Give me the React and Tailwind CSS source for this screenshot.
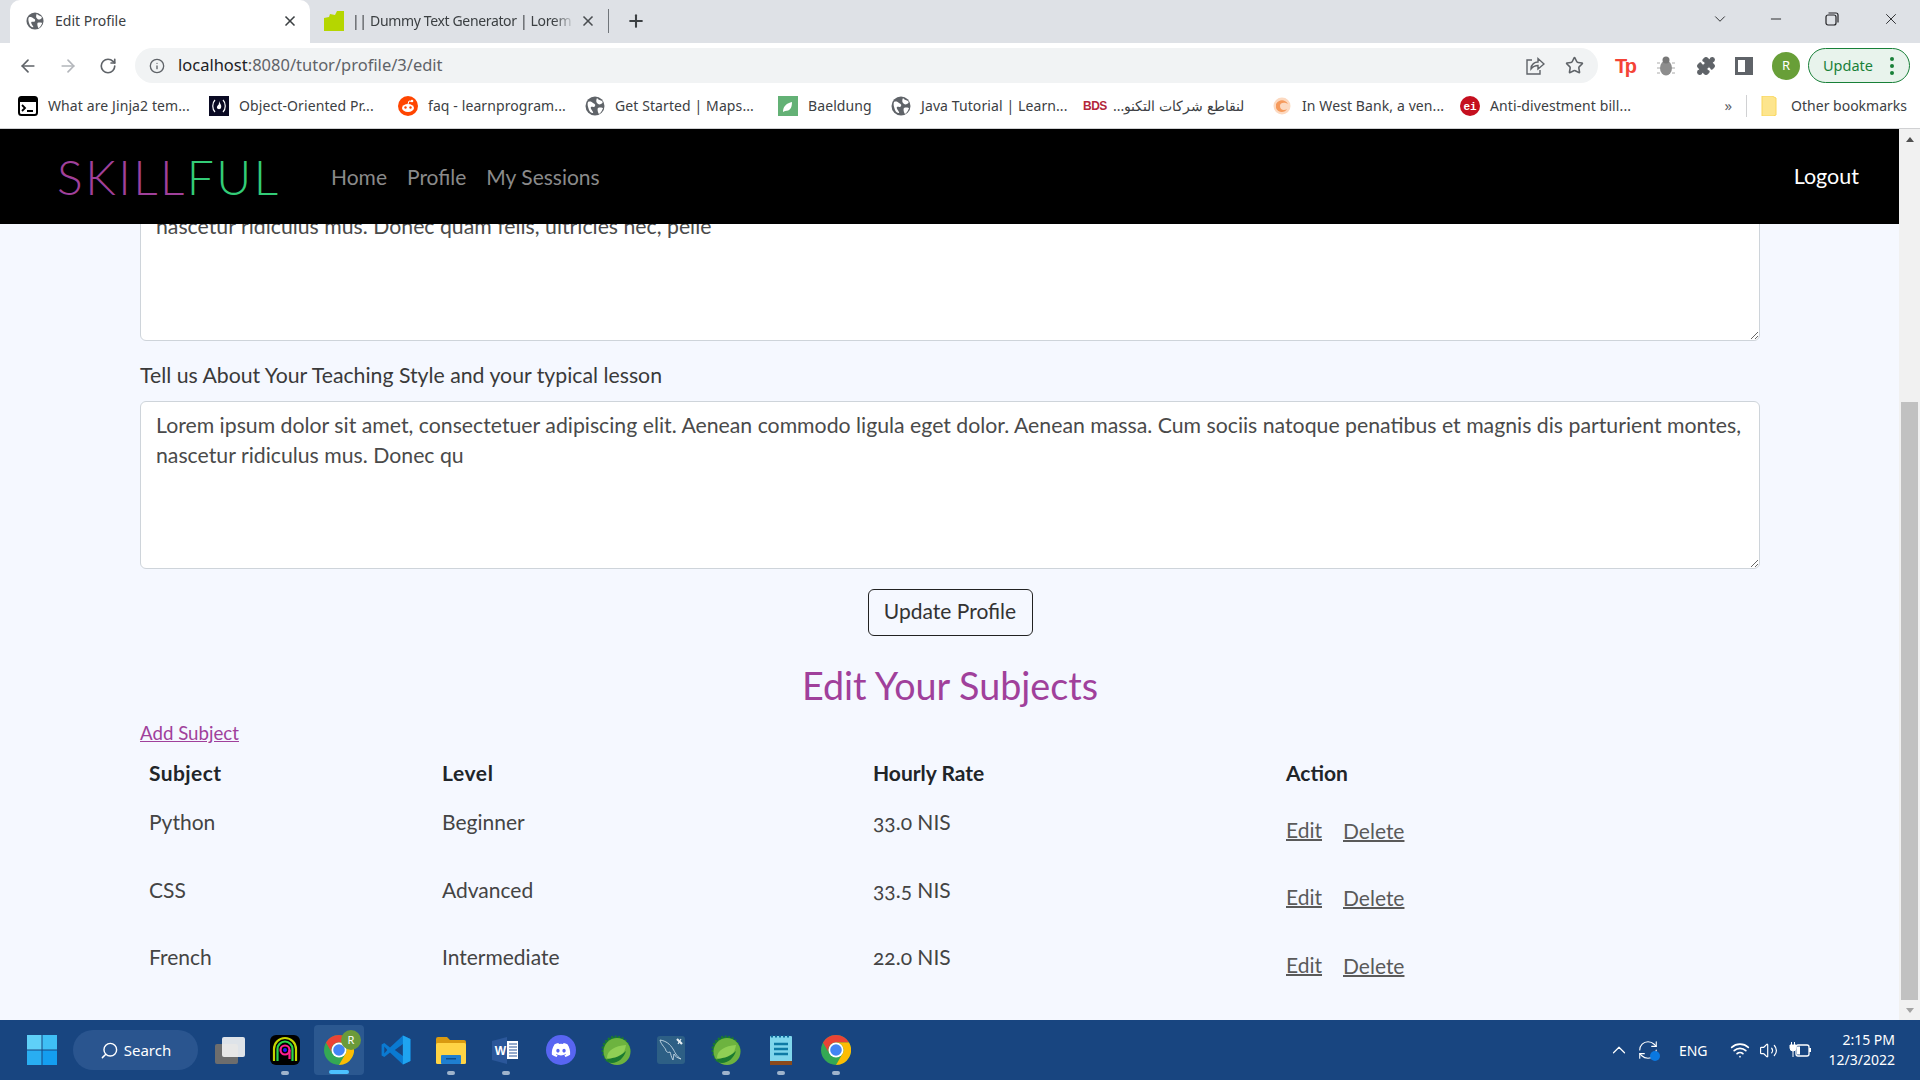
import React from "react";
import { ArrowLeft, ArrowRight, RotateCw, RefreshCw, Info, Star, Puzzle, ChevronDown, Minus, X, Plus, Search, ChevronUp, Wifi, Volume2 } from "lucide-react";
import { FaDiscord } from "react-icons/fa";

const RW = "font-['Lato','Open_Sans',sans-serif]";
const UI = "font-['Noto_Sans','Open_Sans',sans-serif]";

function GlobeIcon({ size = 18 }) {
  return (
    <svg width={size} height={size} viewBox="0 0 20 20" className="shrink-0">
      <circle cx="10" cy="10" r="9.5" fill="#5f6368" />
      <path d="M3 6c2-1 4 0 5 1s3 1 2 3-3 0-4 1 1 3 2 5 -3 1-4-2-2-6-1-8zM12 2c1 2 4 2 5 3s1 2-1 3-3 0-4-1-1-3 0-5zM13 12c2-1 5 0 5 0s-1 4-4 6c-1-1-2-5-1-6z" fill="#fff" />
    </svg>
  );
}
function Bookmark({ icon, label, className = "", rtl }) {
  return (
    <div className={`flex items-center gap-[10px] shrink-0 ${className}`}>
      {icon}
      <span dir={rtl ? "rtl" : undefined} className="text-[14px] tracking-[0.1px] text-[#3c4043] whitespace-nowrap leading-none">{label}</span>
    </div>
  );
}
function TabBar() {
  return (
    <div className="h-[43px] bg-[#dee1e6] flex items-end shrink-0 relative">
      <div className="w-[300px] ml-[10px] h-[43px] bg-white rounded-t-[10px] flex items-center pl-[16px] pr-[12px] pb-[2px] shrink-0">
        <GlobeIcon />
        <span className="ml-[11px] text-[14px] text-[#3c4043] flex-1">Edit Profile</span>
        <X size={16} strokeWidth={2.5} className="text-[#3c4043]" />
      </div>
      <div className="h-[43px] flex items-center pl-[14px] pb-[2px] shrink-0">
        <svg width="20" height="20" viewBox="0 0 20 20" className="shrink-0"><path d="M0 20V7l5-1 1-3 5 1 2-4h7v20z" fill="#b5d600" /></svg>
        <span className="ml-[8px] text-[14px] tracking-[-0.35px] text-[#3c4043] w-[219px] overflow-hidden whitespace-nowrap [mask-image:linear-gradient(to_right,#000_92%,#0003)]">|| Dummy Text Generator | Lorem</span>
        <X size={16} strokeWidth={2.5} className="text-[#4a4d51] ml-[9px]" />
        <div className="w-px h-[24px] bg-[#70757a] ml-[12px]" />
      </div>
      <Plus size={20} strokeWidth={2.5} className="text-[#3c4043] mb-[12px] ml-[17px]" />
      <div className="ml-auto flex items-center h-[38px] self-start text-[#202124]">
        <ChevronDown size={18} strokeWidth={1.2} className="mr-[39px]" />
        <Minus size={16} strokeWidth={1.4} className="mr-[41px]" />
        <svg width="14" height="14" viewBox="0 0 14 14" fill="none" stroke="#202124" strokeWidth="1.2" className="mr-[43px]"><rect x="1" y="3" width="10" height="10" rx="2" /><path d="M3.5 1H11a2 2 0 0 1 2 2v7.5" /></svg>
        <X size={18} strokeWidth={1.2} className="mr-[20px]" />
      </div>
    </div>
  );
}
function Toolbar() {
  return (
    <div className="h-[40px] pt-[5px] bg-white flex items-center shrink-0">
      <ArrowLeft size={20} strokeWidth={2} className="text-[#5f6368] ml-[18px]" />
      <ArrowRight size={20} strokeWidth={2} className="text-[#b3b6bb] ml-[20px]" />
      <RotateCw size={18} strokeWidth={2.2} className="text-[#5f6368] ml-[21px]" />
      <div className="ml-[18px] h-[35px] w-[1463px] rounded-full bg-[#f1f3f4] flex items-center pl-[14px] pr-[14px] shrink-0">
        <Info size={16} strokeWidth={2} className="text-[#5f6368]" />
        <span className="ml-[13px] text-[16.5px] leading-none text-[#5f6368]"><span className="text-[#202124]">localhost</span>:8080/tutor/profile/3/edit</span>
        <svg width="20" height="20" viewBox="0 0 20 20" fill="none" stroke="#5f6368" strokeWidth="1.4" className="ml-auto"><path d="M7 4H2v14h13v-4" /><path d="M6 13c0-5 4-7 7-7V2.500l6 5.500-6 5V9.500c-3 0-5 1-7 3.500z" /></svg>
        <Star size={19} strokeWidth={2} className="text-[#5f6368] ml-[20px]" />
      </div>
      <span className="ml-[17px] w-[20px] text-[#f44336] font-bold text-[20px] leading-none font-['Liberation_Sans',sans-serif] tracking-[-2.5px]">Tp</span>
      <svg width="20" height="22" viewBox="0 0 20 22" className="ml-[21px]"><ellipse cx="10" cy="13" rx="6" ry="7.500" fill="#8d8d8d" /><circle cx="10" cy="5" r="3.500" fill="#777" /><path d="M1 8h3M1 13h3M1 18h3M16 8h3M16 13h3M16 18h3" stroke="#aaa" strokeWidth="1" /></svg>
      <Puzzle size={20} fill="#5f6368" strokeWidth={1.500} className="text-[#5f6368] ml-[20px]" />
      <div className="ml-[19px] w-[18px] h-[18px] border-[3px] border-[#5f6368] bg-[linear-gradient(to_right,#fff_55%,#5f6368_55%)]" />
      <div className="ml-[19px] w-[28px] h-[28px] rounded-full bg-[#689f38] text-white text-[13px] flex items-center justify-center">R</div>
      <div className="ml-[8px] w-[102px] h-[35px] rounded-full border border-[#188038] bg-[#e8f3ec] flex items-center pl-[14px] text-[#188038] text-[14.500px] shrink-0">
        Update
        <div className="ml-auto mr-[15px] flex flex-col gap-[3px]">
          <span className="w-[4px] h-[4px] rounded-full bg-[#188038]" />
          <span className="w-[4px] h-[4px] rounded-full bg-[#188038]" />
          <span className="w-[4px] h-[4px] rounded-full bg-[#188038]" />
        </div>
      </div>
    </div>
  );
}
function BookmarksBar() {
  return (
    <div className="h-[46px] bg-white border-b border-[#d0d1d3] flex items-center pl-[18px] shrink-0">
      <Bookmark className="w-[191px]" label="What are Jinja2 tem..." icon={
        <svg width="20" height="20" viewBox="0 0 20 20"><rect x="1" y="1" width="18" height="18" rx="2.500" fill="#fff" stroke="#000" strokeWidth="2" /><rect x="1" y="1" width="18" height="5" fill="#000" /><path d="M4 9l3 3-3 3M9 15h6" stroke="#000" strokeWidth="1.800" fill="none" /></svg>} />
      <Bookmark className="w-[189px]" label="Object-Oriented Pr..." icon={
        <svg width="20" height="20" viewBox="0 0 20 20"><rect width="20" height="20" fill="#0a0a23" /><path d="M6 4c-3 3-3 9 0 12M14 4c3 3 3 9 0 12" stroke="#fff" fill="none" strokeWidth="1.200" /><path d="M10 5c1 3 3 4 2 7-.5 1.500-3.500 1.500-4 0-.5-2 1-2 1-3 1 0 1-2 1-4z" fill="#fff" /></svg>} />
      <Bookmark className="w-[187px]" label="faq - learnprogram..." icon={
        <svg width="20" height="20" viewBox="0 0 20 20"><circle cx="10" cy="10" r="10" fill="#ff4500" /><ellipse cx="10" cy="12" rx="6" ry="4" fill="#fff" /><circle cx="7.500" cy="11.500" r="1.200" fill="#ff4500" /><circle cx="12.500" cy="11.500" r="1.200" fill="#ff4500" /><circle cx="14" cy="5" r="1.300" fill="#fff" /><path d="M10 8l1-3 3 .5" stroke="#fff" fill="none" /></svg>} />
      <Bookmark className="w-[193px]" label="Get Started  |  Maps..." icon={<GlobeIcon size={20} />} />
      <Bookmark className="w-[113px]" label="Baeldung" icon={
        <svg width="20" height="20" viewBox="0 0 20 20"><rect width="20" height="20" fill="#63b175" /><path d="M5 16c0-6 4-9 9-10 0 6-2 9-7 9z" fill="#fff" /></svg>} />
      <Bookmark className="w-[192px]" label="Java Tutorial | Learn..." icon={<GlobeIcon size={20} />} />
      <Bookmark className="w-[189px]" rtl label="لنقاطع شركات التكنو..." icon={
        <span className="font-['Liberation_Sans',sans-serif] font-bold text-[#b3263a] text-[12px] w-[20px] tracking-[-.5px]">BDS</span>} />
      <Bookmark className="w-[188px]" label="In West Bank, a ven..." icon={
        <svg width="20" height="20" viewBox="0 0 20 20"><circle cx="10" cy="10" r="8.500" fill="#fcd9c0" /><path d="M4 8c3-5 9-5 12 0-3-2-8-2-8 2s4 5 7 3c-2 4-9 4-11-1" fill="#f59a5c" /></svg>} />
      <Bookmark label="Anti-divestment bill..." icon={
        <svg width="20" height="20" viewBox="0 0 20 20"><circle cx="10" cy="10" r="10" fill="#c50f1f" /><text x="10" y="14" textAnchor="middle" fontSize="11" fontWeight="700" fill="#fff" fontFamily="Liberation Mono">ei</text></svg>} />
      <span className="ml-auto text-[#5f6368] text-[15px] leading-none">»</span>
      <div className="w-px h-[22px] bg-[#d0d1d3] ml-[14px]" />
      <svg width="16" height="20" viewBox="0 0 16 20" className="ml-[14px]"><path d="M1 0h10l4 2v17l-3 1H1z" fill="#fde58d" stroke="#f9d65c" strokeWidth="1" /></svg>
      <span className="ml-[14px] mr-[13px] text-[14px] text-[#3c4043] leading-none">Other bookmarks</span>
    </div>
  );
}
function Navbar() {
  return (
    <div className={`h-[95px] bg-black flex items-center pl-[57px] pr-[40px] shrink-0 ${RW}`}>
      <div className="text-[48px] font-light leading-none tracking-[2.5px] w-[274px]">
        <span className="text-[#a0409b]">SKILL</span><span className="text-[#33cc77]">FUL</span>
      </div>
      <div className="flex gap-[20px] text-[21px] text-[#8a8a8a]">
        <span>Home</span><span>Profile</span><span>My Sessions</span>
      </div>
      <span className="ml-auto text-[21.500px] text-white">Logout</span>
    </div>
  );
}
const LOREM1 = "Lorem ipsum dolor sit amet, consectetuer adipiscing elit. Aenean commodo ligula eget dolor. Aenean massa. Cum sociis natoque penatibus et magnis dis parturient montes,\nnascetur ridiculus mus. Donec quam felis, ultricies nec, pelle";
const LOREM2 = "Lorem ipsum dolor sit amet, consectetuer adipiscing elit. Aenean commodo ligula eget dolor. Aenean massa. Cum sociis natoque penatibus et magnis dis parturient montes,\nnascetur ridiculus mus. Donec qu";

function Area({ value, className = "" }) {
  return (
    <textarea readOnly value={value} className={`block w-full bg-white border border-[#ced4da] rounded-[6px] px-[15px] py-[8px] text-[21.250px] leading-[30px] text-[#4a4a4a] ${RW} ${className}`} />
  );
}
const rows = [
  ["Python", "Beginner", "33.0 NIS"],
  ["CSS", "Advanced", "33.5 NIS"],
  ["French", "Intermediate", "22.0 NIS"],
];
function Content() {
  return (
    <div className={`flex-1 bg-[#f5f8ff] overflow-hidden px-[140px] ${RW}`}>
      <div className="-mt-[52px] w-[1620px]">
        <Area value={LOREM1} className="h-[169px]" />
        <label className="block mt-[22px] text-[21.250px] leading-[24px] text-[#3a3a3a]">Tell us About Your Teaching Style and your typical lesson</label>
        <Area value={LOREM2} className="mt-[14px] h-[168px]" />
        <div className="flex justify-center mt-[20px]">
          <button className="w-[165px] h-[47px] pb-[3px] border border-[#222] rounded-[6px] text-[21px] text-[#333]">Update Profile</button>
        </div>
        <h2 className="mt-[28px] text-center text-[37.700px] leading-[44px] text-[#a0409b]">Edit Your Subjects</h2>
        <a className="block mt-[14px] text-[18.700px] leading-[22px] text-[#a0409b] underline">Add Subject</a>
        <table className="mt-[8px] w-[1620px] table-fixed text-[21px] text-[#444]">
          <thead>
            <tr className="h-[41px] text-left text-[#212529]">
              <th className="w-[292px] pl-[9px] font-bold tracking-[0.4px]">Subject</th>
              <th className="w-[431px] pl-[10px] font-bold tracking-[0.6px]">Level</th>
              <th className="w-[413px] pl-[10px] font-bold">Hourly Rate</th>
              <th className="pl-[10px] font-bold">Action</th>
            </tr>
          </thead>
          <tbody>
            {rows.map((r) => (
              <tr key={r[0]} className="h-[67.5px]">
                <td className="pl-[9px] pb-[10px]">{r[0]}</td>
                <td className="pl-[10px] pb-[10px]">{r[1]}</td>
                <td className="pl-[10px] pb-[10px] oldstyle-nums">{r[2]}</td>
                <td className="pl-[10px] pt-[5px] text-[#5a5a5a]">
                  <span className="underline decoration-2">Edit</span>
                  <span className="underline decoration-2 ml-[21px] relative top-[1px]">Delete</span>
                </td>
              </tr>
            ))}
          </tbody>
        </table>
      </div>
    </div>
  );
}
function Scrollbar() {
  return (
    <div className="w-[21px] bg-[#f1f1f1] flex flex-col items-center shrink-0">
      <div className="h-[21px] flex items-center justify-center"><div className="w-0 h-0 border-x-[4px] border-x-transparent border-b-[5px] border-b-[#505050]" /></div>
      <div className="flex-1 flex flex-col justify-end w-[17px]"><div className="h-[598px] bg-[#c1c1c1]" /></div>
      <div className="h-[20px] flex items-center justify-center"><div className="w-0 h-0 border-x-[4px] border-x-transparent border-t-[5px] border-t-[#a3a3a3]" /></div>
    </div>
  );
}
const Dot = () => <span className="absolute bottom-[5px] left-1/2 -translate-x-1/2 w-[8px] h-[4px] rounded-full bg-[#9fb4cc]" />;
function TIcon({ dot, children, className = "" }) {
  return (
    <div className={`relative w-[55px] h-[60px] flex items-center justify-center shrink-0 ${className}`}>
      {children}
      {dot && <Dot />}
    </div>
  );
}
function Chrome({ size = 30 }) {
  return (
    <svg width={size} height={size} viewBox="0 0 30 30">
      <circle cx="15" cy="15" r="15" fill="#34a853" />
      <path d="M15 0a15 15 0 0 1 13 7.500H15A7.500 7.500 0 0 0 8.500 19L2 7.500A15 15 0 0 1 15 0z" fill="#ea4335" />
      <path d="M28 7.500A15 15 0 0 1 15 30l6.500-11.250A7.500 7.500 0 0 0 15 7.500z" fill="#fbbc04" />
      <circle cx="15" cy="15" r="7.500" fill="#fff" />
      <circle cx="15" cy="15" r="5.800" fill="#4285f4" />
    </svg>
  );
}
function Spring() {
  return (
    <svg width="30" height="30" viewBox="0 0 30 30">
      <circle cx="15" cy="15" r="13" fill="#1a7a30" stroke="#1a7a30" strokeWidth="3" strokeDasharray="2 1.500" />
      <circle cx="16" cy="16.500" r="13.500" fill="#6db33f" />
      <path d="M6 23c0-8 8-12 19-13-1 8-6 13-12 14-3 .5-5-1-7-1z" fill="#8fcf55" />
      <path d="M4 25c6-2 14-2 21-9-2 7-8 12-14 12-3 0-5-1-7-3z" fill="#1a7a30" />
    </svg>
  );
}
function Taskbar() {
  return (
    <div className="h-[60px] bg-[#184580] flex items-center shrink-0 text-white">
      <svg width="30" height="30" viewBox="0 0 30 30" className="ml-[27px] shrink-0">
        <rect width="14.500" height="14.500" fill="#5fd0f8" /><rect x="15.500" width="14.500" height="14.500" fill="#3fbff5" />
        <rect y="15.500" width="14.500" height="14.500" fill="#29aef2" /><rect x="15.500" y="15.500" width="14.500" height="14.500" fill="#149ef0" />
      </svg>
      <div className="ml-[16px] w-[125px] h-[40px] rounded-full bg-[#2a558f] flex items-center justify-center gap-[5px] text-[15px] shrink-0">
        <Search size={19} strokeWidth={1.800} className="-scale-x-100" />Search
      </div>
      <TIcon className="ml-[4px]">
        <div className="relative w-[30px] h-[27px]">
          <div className="absolute left-0 bottom-0 w-[23px] h-[20px] rounded-[2px] bg-[#6d6d6d]" />
          <div className="absolute right-0 top-0 w-[23px] h-[20px] rounded-[2px] bg-[#f4f4f4]/90" />
        </div>
      </TIcon>
      <TIcon dot>
        <svg width="30" height="30" viewBox="0 0 30 30"><rect width="30" height="30" rx="6" fill="#000" /><path d="M4 26V14a11 11 0 0 1 22 0v12" fill="none" stroke="#c5d600" strokeWidth="2.200" /><path d="M7.500 26V14a7.500 7.500 0 0 1 15 0v12" fill="none" stroke="#2bd44a" strokeWidth="2.200" /><circle cx="15" cy="15" r="4.500" fill="none" stroke="#ff1f8f" strokeWidth="2.200" /><path d="M19.500 15v9" stroke="#ff1f8f" strokeWidth="2.200" /><circle cx="15" cy="15" r="2" fill="#1a1aff" /></svg>
      </TIcon>
      <TIcon className="bg-[#2b5890] rounded-[4px] !h-[50px] !w-[50px] ml-[2px] mr-[4px] relative">
        <Chrome size={30} />
        <div className="absolute right-[3px] top-[5px] w-[20px] h-[20px] rounded-full bg-[#6b9a3a] text-[11px] flex items-center justify-center">R</div>
        <span className="absolute bottom-[1px] left-1/2 -translate-x-1/2 w-[20px] h-[4px] rounded-full bg-[#4cc2ff]" />
      </TIcon>
      <TIcon>
        <svg width="30" height="30" viewBox="0 0 100 100">
          <path d="M73 2L30 42 11 27 2 32v36l9 5 19-15 43 40 25-11V13z" fill="#0a7ad1" />
          <path d="M73 30L46 50l27 20zM11 38l10 12-10 12z" fill="#184580" />
          <path d="M73 2l25 11v74l-25 11z" fill="#1fa4f0" />
        </svg>
      </TIcon>
      <TIcon dot>
        <svg width="30" height="28" viewBox="0 0 30 28"><path d="M0 3a2 2 0 0 1 2-2h9l3 3h14a2 2 0 0 1 2 2v3H0z" fill="#d99a10" /><rect y="7" width="30" height="21" rx="1.500" fill="#ffd445" /><rect x="5" y="19" width="20" height="9" rx="1" fill="#1f7fd0" /><rect x="10" y="22" width="10" height="1.500" fill="#0c4f8f" /></svg>
      </TIcon>
      <TIcon dot>
        <svg width="27" height="27" viewBox="0 0 27 27"><path d="M0 4l15-4v27L0 23z" fill="#2b579a" /><rect x="15" y="4" width="11" height="18" fill="#fff" /><path d="M17 7h8M17 10h8M17 13h8M17 16h8M17 19h8" stroke="#2b579a" strokeWidth="1.200" /><text x="8.500" y="18" textAnchor="middle" fontSize="12" fill="#fff" fontWeight="700" fontFamily="Liberation Sans">W</text></svg>
      </TIcon>
      <TIcon>
        <div className="w-[30px] h-[30px] rounded-full bg-[#5865f2] flex items-center justify-center"><FaDiscord size={20} color="#fff" /></div>
      </TIcon>
      <TIcon><Spring /></TIcon>
      <TIcon>
        <svg width="28" height="28" viewBox="0 0 28 28">
          <rect width="28" height="28" rx="3" fill="#2d5f85" />
          <path d="M3 4c6 1 10 4 13 9 2 3 3 7 8 10-4-1-6-3-7-5l-1 6c-2-3-2-6-3-8-2 1-3 0-4-1 0-3-5-6-6-11z" fill="none" stroke="#c5d8e4" strokeWidth="0.900" />
          <path d="M20 3l5 5" stroke="#e6eef3" strokeWidth="2.200" />
          <path d="M21 8l3-5" stroke="#e6eef3" strokeWidth="1.200" />
        </svg>
      </TIcon>
      <TIcon dot><Spring /></TIcon>
      <TIcon dot>
        <svg width="22" height="30" viewBox="0 0 22 30"><rect y="1" width="22" height="29" rx="1" fill="#7fd6ec" /><rect y="26" width="22" height="4" fill="#8a4a1c" /><path d="M4 9h14M4 14h14M4 19h14" stroke="#0e7aa5" strokeWidth="2.500" /><path d="M1 1.500h20" stroke="#0e6a9a" strokeWidth="2" strokeDasharray="2 2" /></svg>
      </TIcon>
      <TIcon dot><Chrome /></TIcon>
      <div className="ml-auto flex items-center shrink-0">
        <ChevronUp size={22} strokeWidth={1.3} />
        <div className="relative ml-[7px] w-[22px] h-[22px]">
          <RefreshCw size={22} strokeWidth={1.200} />
          <span className="absolute right-[-1px] bottom-[0px] w-[10px] h-[10px] rounded-full bg-[#0a78e0]" />
        </div>
        <span className="ml-[20px] text-[14px]">ENG</span>
        <Wifi size={20} strokeWidth={2} className="ml-[22px]" />
        <Volume2 size={19} strokeWidth={1.5} className="ml-[9px]" />
        <svg width="22" height="18" viewBox="0 0 22 18" className="ml-[11px]"><rect x="7" y="4" width="13" height="11" rx="2" fill="none" stroke="#fff" strokeWidth="1.300" /><rect x="20" y="7" width="2" height="4" fill="#fff" /><rect x="8" y="5.500" width="3" height="8" fill="#fff" /><path d="M1 4h6v3a3 3 0 0 1-6 0zM2.500 1v3M5.500 1v3M4 10v6" stroke="#fff" fill="#fff" strokeWidth="1" /></svg>
        <div className="ml-[18px] mr-[25px] text-right text-[14px] leading-[20px]">
          <div>2:15 PM</div>
          <div>12/3/2022</div>
        </div>
      </div>
    </div>
  );
}
export default function App() {
  return (
    <div className={`w-[1920px] h-[1080px] flex flex-col overflow-hidden ${UI}`}>
      <TabBar />
      <Toolbar />
      <BookmarksBar />
      <div className="flex-1 flex min-h-0">
        <div className="flex-1 flex flex-col min-w-0">
          <Navbar />
          <Content />
        </div>
        <Scrollbar />
      </div>
      <Taskbar />
    </div>
  );
}
